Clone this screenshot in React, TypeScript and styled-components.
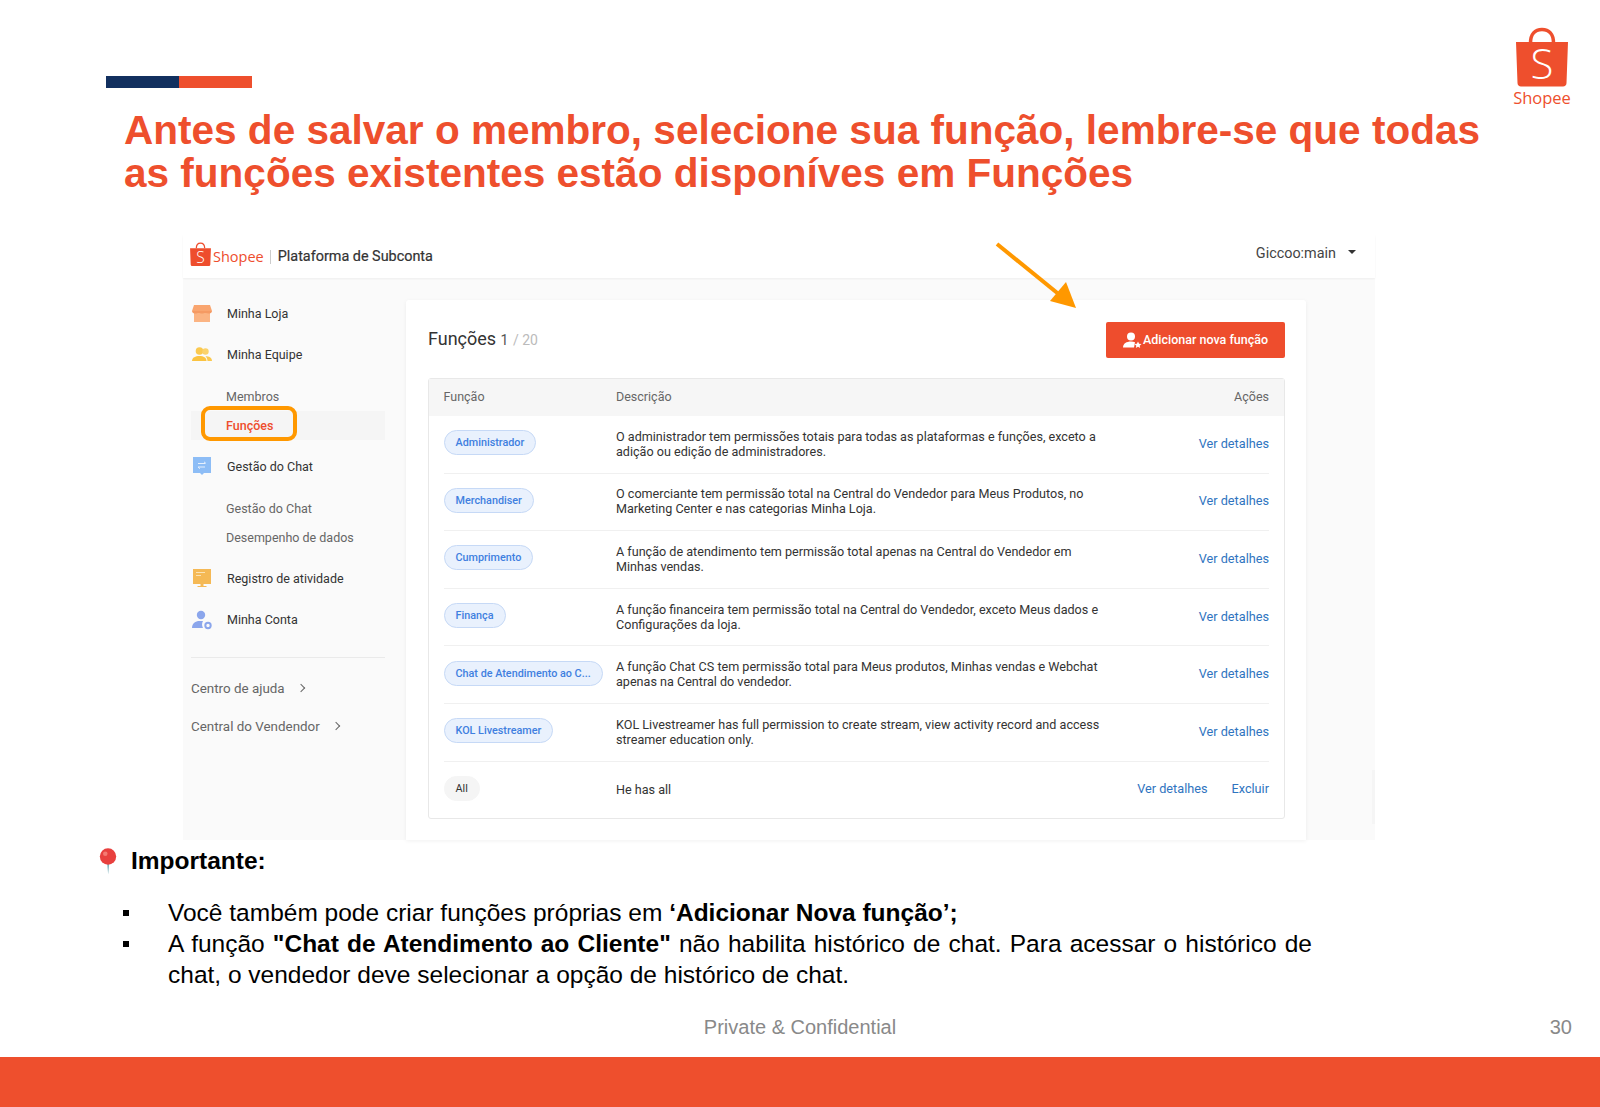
import React from "react";
import styled, { createGlobalStyle } from "styled-components";

const SideTop = [
  { icon: "store", label: "Minha Loja" },
  { icon: "team", label: "Minha Equipe" },
];

const Roles = [
  { tag: "Administrador", text: ["O administrador tem permissões totais para todas as plataformas e funções, exceto a", "adição ou edição de administradores."] },
  { tag: "Merchandiser", text: ["O comerciante tem permissão total na Central do Vendedor para Meus Produtos, no", "Marketing Center e nas categorias Minha Loja."] },
  { tag: "Cumprimento", text: ["A função de atendimento tem permissão total apenas na Central do Vendedor em", "Minhas vendas."] },
  { tag: "Finança", text: ["A função financeira tem permissão total na Central do Vendedor, exceto Meus dados e", "Configurações da loja."] },
  { tag: "Chat de Atendimento ao C...", text: ["A função Chat CS tem permissão total para Meus produtos, Minhas vendas e Webchat", "apenas na Central do vendedor."] },
  { tag: "KOL Livestreamer", text: ["KOL Livestreamer has full permission to create stream, view activity record and access", "streamer education only."] },
];

function NavIcon({ name }: { name: string }) {
  if (name === "store") {
    return (
      <svg width="20" height="20" viewBox="0 0 20 20">
        <path d="M2 1h16l2 6H0z" fill="#f9a56f" />
        <path d="M2 8.500h16V18H2z" fill="#fbb483" />
        <path d="M0 7h20c0 2-2 2.500-3.300 2.500-1.200 0-2.200-.5-3.300-.5s-2 .5-3.400.5-2.300-.5-3.400-.5-2 .5-3.300.5C2 9.500 0 9 0 7z" fill="#f59a63" />
      </svg>
    );
  }
  if (name === "team") {
    return (
      <svg width="20" height="20" viewBox="0 0 20 20">
        <circle cx="7.500" cy="6" r="3.800" fill="#fbc94f" />
        <circle cx="13.500" cy="6.500" r="3.200" fill="#fbd26b" />
        <path d="M0 16c0-3.600 3.500-5 7.500-5s7 1.400 7 5z" fill="#fbc340" />
        <path d="M15.500 16c0-2-.8-3.500-2-4.800 3.500 0 6.500 1.400 6.500 4.800z" fill="#fbc94f" />
      </svg>
    );
  }
  if (name === "chat") {
    return (
      <svg width="20" height="20" viewBox="0 0 20 20">
        <path d="M1 0h18v16h-7l-2 2-2-2H1z" fill="#8dbdf6" />
        <path d="M6 6.500h7M6 10h7" stroke="#e6f0fd" strokeWidth="1" fill="none" />
        <path d="M12 4.800l2 1.700M8 11.700L6 10" stroke="#e6f0fd" strokeWidth="1" fill="none" />
      </svg>
    );
  }
  if (name === "monitor") {
    return (
      <svg width="20" height="20" viewBox="0 0 20 20">
        <path d="M1 0h18v15H1z" fill="#f5b955" />
        <path d="M4 3.500h9M4 6.500h5" stroke="#fbe3b5" strokeWidth="1.200" fill="none" />
        <path d="M8.500 15h3v2h3v1h-9v-1h3z" fill="#f5b955" />
      </svg>
    );
  }
  return (
    <svg width="20" height="20" viewBox="0 0 20 20">
      <circle cx="9" cy="5" r="4.200" fill="#8ba6ec" />
      <path d="M0 18c0-4.500 3.500-7 7.500-7h3.500c-1 1.500-1.500 4.500 0 7z" fill="#8ba6ec" />
      <circle cx="16" cy="15.500" r="2.700" fill="none" stroke="#8ba6ec" strokeWidth="2" />
    </svg>
  );
}

export default function App() {
  return (
    <Slide>
      <GlobalStyle />
      <TopArea>
        <Heading>
          <Bars>
            <BarPiece $color="#12305f" />
            <BarPiece $color="#ee4f2d" />
          </Bars>
          <Title>
            Antes de salvar o membro, selecione sua função, lembre-se que todas
            <br />
            as funções existentes estão disponíves em Funções
          </Title>
        </Heading>
        <Brand>
          <LogoSvg width="54" height="60" viewBox="0 0 54 60">
            <path d="M15.500 16C15.500 7 20 2.500 27 2.500S38.500 7 38.500 16" fill="none" stroke="#ee4f2d" strokeWidth="3.500" />
            <path d="M1 15h52l-1.500 41c0 2-1.500 3.500-3.500 3.500H6c-2 0-3.500-1.500-3.500-3.500z" fill="#ee4f2d" />
            <text x="27" y="52" textAnchor="middle" fontFamily="'Open Sans', sans-serif" fontWeight="300" fontSize="42" fill="#fff">S</text>
          </LogoSvg>
          <BrandName>Shopee</BrandName>
        </Brand>
      </TopArea>

      <Shot>
        <ShotHeader>
          <ShotBrand>
            <ShotLogo width="21" height="24" viewBox="0 0 20 23">
              <path d="M6 6c0-3 1.500-5 4-5s4 2 4 5" fill="none" stroke="#ee4d2d" strokeWidth="1.200" />
              <path d="M0 6h20l-.6 15.500c0 .8-.5 1.500-1.400 1.500H2c-.9 0-1.400-.7-1.400-1.500z" fill="#ee4d2d" />
              <text x="10" y="20" textAnchor="middle" fontFamily="'Open Sans', sans-serif" fontWeight="300" fontSize="15" fill="#fff">S</text>
            </ShotLogo>
            <ShotBrandName>Shopee</ShotBrandName>
            <ShotDivider />
            <ShotPlatform>Plataforma de Subconta</ShotPlatform>
          </ShotBrand>
          <UserMenu>
            Giccoo:main
            <Caret />
          </UserMenu>
        </ShotHeader>

        <ShotBody>
          <Sidebar>
            {SideTop.map((item) => (
              <NavRow key={item.label}>
                <NavIcon name={item.icon} />
                <span>{item.label}</span>
              </NavRow>
            ))}
            <SubGroup>
              <SubRow>Membros</SubRow>
              <SubRow $active>Funções</SubRow>
            </SubGroup>
            <NavRow>
              <NavIcon name="chat" />
              <span>Gestão do Chat</span>
            </NavRow>
            <SubGroup>
              <SubRow>Gestão do Chat</SubRow>
              <SubRow>Desempenho de dados</SubRow>
            </SubGroup>
            <NavRow>
              <NavIcon name="monitor" />
              <span>Registro de atividade</span>
            </NavRow>
            <NavRow>
              <NavIcon name="user" />
              <span>Minha Conta</span>
            </NavRow>
            <SideLine />
            <OuterLink>
              Centro de ajuda
              <Chevron />
            </OuterLink>
            <OuterLink>
              Central do Vendendor
              <Chevron />
            </OuterLink>
          </Sidebar>

          <Card>
            <CardHead>
              <CardTitle>
                Funções <Count>1</Count> <CountMax>/ 20</CountMax>
              </CardTitle>
              <AddButton>
                <svg width="19" height="16" viewBox="0 0 19 16">
                  <circle cx="8" cy="4.500" r="4" fill="#fff" />
                  <path d="M0 15.500c0-4 3.500-6 8-6 1.500 0 2.800.2 4 .7L11 15.500z" fill="#fff" />
                  <path d="M15 9.500l1.100 2.300 2.400.3-1.800 1.600.5 2.300-2.200-1.200-2.200 1.200.5-2.300-1.800-1.600 2.400-.3z" fill="#fff" />
                </svg>
                Adicionar nova função
              </AddButton>
            </CardHead>

            <Table>
              <TableHead>
                <span>Função</span>
                <span>Descrição</span>
                <HeadActions>Ações</HeadActions>
              </TableHead>
              {Roles.map((role) => (
                <Row key={role.tag}>
                  <Cell>
                    <Tag>{role.tag}</Tag>
                  </Cell>
                  <Description>
                    {role.text[0]}
                    <br />
                    {role.text[1]}
                  </Description>
                  <Actions>
                    <ActionLink>Ver detalhes</ActionLink>
                  </Actions>
                </Row>
              ))}
              <Row $last>
                <Cell>
                  <Tag $plain>All</Tag>
                </Cell>
                <Description>He has all</Description>
                <Actions>
                  <ActionLink>Ver detalhes</ActionLink>
                  <ActionLink>Excluir</ActionLink>
                </Actions>
              </Row>
            </Table>
          </Card>
        </ShotBody>

        <Highlight />
        <Arrow width="90" height="74" viewBox="0 0 90 74">
          <path d="M2 2L66 54" stroke="#ff9800" strokeWidth="4" fill="none" />
          <path d="M81 66L55 59 71 40z" fill="#ff9800" />
        </Arrow>
        <ScrollShade />
      </Shot>

      <Notes>
        <NoteTitle>
          <svg width="20" height="28" viewBox="0 0 22 30">
            <path d="M10 17l1.200 12.500 1.200-12.500z" fill="#7fb3bd" />
            <circle cx="11" cy="10" r="9" fill="#e8403e" />
            <circle cx="8" cy="7" r="2.500" fill="#f47a72" />
          </svg>
          Importante:
        </NoteTitle>
        <NoteList>
          <NoteItem>
            Você também pode criar funções próprias em <strong>‘Adicionar Nova função’;</strong>
          </NoteItem>
          <NoteItem>
            A função <strong>"Chat de Atendimento ao Cliente"</strong> não habilita histórico de chat. Para acessar o histórico de chat, o vendedor deve selecionar a opção de histórico de chat.
          </NoteItem>
        </NoteList>
      </Notes>

      <FootRow>
        <span>Private &amp; Confidential</span>
        <PageNumber>30</PageNumber>
      </FootRow>
      <FootBar />
    </Slide>
  );
}

const GlobalStyle = createGlobalStyle`
  html, body {
    margin: 0;
    padding: 0;
    background: #fff;
  }
  * {
    box-sizing: border-box;
  }
`;

const Slide = styled.div`
  width: 1600px;
  height: 1107px;
  display: flex;
  flex-direction: column;
  overflow: hidden;
  background: #fff;
  font-family: "Liberation Sans", Arial, sans-serif;
`;

const TopArea = styled.div`
  height: 235px;
  display: flex;
  justify-content: space-between;
  align-items: flex-start;
  padding: 27px 28px 0 106px;
`;

const Heading = styled.div`
  padding-top: 49px;
`;

const Bars = styled.div`
  display: flex;
  width: 146px;
  height: 12px;
`;

const BarPiece = styled.div<{ $color: string }>`
  flex: 1;
  background: ${(p) => p.$color};
`;

const Title = styled.h1`
  margin: 21px 0 0 18px;
  color: #ee4f2d;
  font-size: 40.540px;
  line-height: 43px;
  font-weight: 700;
  white-space: nowrap;
`;

const Brand = styled.div`
  width: 60px;
  display: flex;
  flex-direction: column;
  align-items: center;
`;

const LogoSvg = styled.svg`
  overflow: visible;
`;

const BrandName = styled.div`
  color: #ee4f2d;
  font-family: "Open Sans", sans-serif;
  font-size: 16.500px;
  line-height: 22px;
`;

const Shot = styled.div`
  position: relative;
  width: 1192px;
  height: 605px;
  margin-left: 183px;
  display: flex;
  flex-direction: column;
  font-family: Roboto, sans-serif;
  background: #fafafa;
`;

const ShotHeader = styled.div`
  height: 43px;
  flex: none;
  display: flex;
  justify-content: space-between;
  align-items: center;
  padding: 0 19px 0 7px;
  background: #fff;
  box-shadow: 0 1px 2px rgba(0, 0, 0, 0.05);
`;

const ShotBrand = styled.div`
  display: flex;
  align-items: center;
`;

const ShotLogo = styled.svg`
  margin-bottom: 6px;
  overflow: visible;
`;

const ShotBrandName = styled.span`
  margin-left: 2px;
  color: #ee4d2d;
  font-family: "Open Sans", sans-serif;
  font-size: 14.500px;
`;

const ShotDivider = styled.span`
  width: 1px;
  height: 14px;
  margin: 0 7px 0 6px;
  background: #ccc;
`;

const ShotPlatform = styled.span`
  color: #333;
  font-size: 14.400px;
  font-weight: 400;
  -webkit-text-stroke: 0.2px #333;
`;

const UserMenu = styled.div`
  display: flex;
  align-items: center;
  gap: 12px;
  padding-bottom: 6px;
  color: #444;
  font-size: 14.400px;
`;

const Caret = styled.span`
  width: 0;
  height: 0;
  margin-bottom: 3px;
  border-left: 4px solid transparent;
  border-right: 4px solid transparent;
  border-top: 4px solid #333;
`;

const ShotBody = styled.div`
  flex: 1;
  display: flex;
  min-height: 0;
`;

const Sidebar = styled.div`
  width: 223px;
  flex: none;
  padding: 15px 21px 0 8px;
`;

const NavRow = styled.div`
  height: 41px;
  display: flex;
  align-items: center;
  gap: 15px;
  padding-left: 1px;
  color: #333;
  font-size: 12.500px;
`;

const SubGroup = styled.div`
  padding: 6.500px 0;
`;

const SubRow = styled.div<{ $active?: boolean }>`
  height: 29px;
  display: flex;
  align-items: center;
  padding-left: 35px;
  font-size: 12.500px;
  color: ${(p) => (p.$active ? "#ee4d2d" : "#666")};
  font-weight: ${(p) => (p.$active ? 500 : 400)};
  background: ${(p) => (p.$active ? "#f5f5f5" : "transparent")};
`;

const SideLine = styled.div`
  height: 1px;
  margin: 17px 0 11px;
  background: #eaeaea;
`;

const OuterLink = styled.div`
  height: 38px;
  display: flex;
  align-items: center;
  gap: 13px;
  color: #666;
  font-size: 13.400px;
`;

const Chevron = styled.span`
  width: 6px;
  height: 6px;
  border-top: 1px solid #666;
  border-right: 1px solid #666;
  transform: rotate(45deg);
`;

const Card = styled.div`
  width: 900px;
  margin-top: 22px;
  padding: 22px 21px 0 22px;
  background: #fff;
  border-radius: 3px 3px 0 0;
  box-shadow: 0 1px 4px rgba(0, 0, 0, 0.06);
`;

const CardHead = styled.div`
  height: 35px;
  display: flex;
  justify-content: space-between;
  align-items: center;
`;

const CardTitle = styled.div`
  padding-bottom: 2px;
  color: #333;
  font-size: 18px;
`;

const Count = styled.span`
  font-size: 14px;
  color: #555;
`;

const CountMax = styled.span`
  font-size: 14px;
  color: #bbb;
`;

const AddButton = styled.div`
  width: 179px;
  height: 36px;
  display: flex;
  align-items: center;
  justify-content: center;
  gap: 1px;
  color: #fff;
  font-size: 12.500px;
  font-weight: 500;
  background: #ee4d2d;
  border-radius: 2px;
`;

const Table = styled.div`
  margin-top: 21px;
  border: 1px solid #e8e8e8;
  border-radius: 3px;
  padding: 0 15px 0 14.500px;
`;

const TableHead = styled.div`
  height: 37px;
  margin: 0 -15px 0 -14.500px;
  padding: 0 15px 3px 14.500px;
  display: grid;
  grid-template-columns: 172.500px 1fr auto;
  align-items: center;
  color: #666;
  font-size: 12.500px;
  background: #f6f6f6;
`;

const HeadActions = styled.span`
  text-align: right;
`;

const Row = styled.div<{ $last?: boolean }>`
  height: ${(p) => (p.$last ? "56.600px" : "57.600px")};
  display: grid;
  grid-template-columns: 172.500px 1fr auto;
  align-items: center;
  border-bottom: ${(p) => (p.$last ? "none" : "1px solid #f0f0f0")};
`;

const Cell = styled.div`
  display: flex;
  padding-bottom: 3px;
`;

const Tag = styled.span<{ $plain?: boolean }>`
  height: 25px;
  padding: 0 11px;
  display: inline-flex;
  align-items: center;
  font-size: 10.800px;
  font-weight: ${(p) => (p.$plain ? 400 : 500)};
  color: ${(p) => (p.$plain ? "#333" : "#3f7fe0")};
  background: ${(p) => (p.$plain ? "#f5f5f5" : "#e9f1fd")};
  border: 1px solid ${(p) => (p.$plain ? "#f5f5f5" : "#c6d9f6")};
  border-radius: 13px;
  white-space: nowrap;
`;

const Description = styled.div`
  padding-bottom: 1px;
  color: #333;
  font-size: 12.600px;
  line-height: 15px;
  white-space: nowrap;
`;

const Actions = styled.div`
  display: flex;
  justify-content: flex-end;
  gap: 24px;
  padding-bottom: 2px;
`;

const ActionLink = styled.span`
  color: #2f74c0;
  font-size: 12.700px;
`;

const Highlight = styled.div`
  position: absolute;
  left: 18px;
  top: 171px;
  width: 96px;
  height: 35px;
  border: 4px solid #ff9800;
  border-radius: 9px;
`;

const Arrow = styled.svg`
  position: absolute;
  left: 811.500px;
  top: 7px;
`;

const ScrollShade = styled.div`
  position: absolute;
  right: 0;
  top: 535px;
  width: 3px;
  height: 54px;
  background: rgba(0, 0, 0, 0.02);
`;

const Notes = styled.div`
  padding: 5px 0 0 98px;
`;

const NoteTitle = styled.div`
  height: 32px;
  display: flex;
  align-items: center;
  gap: 13px;
  color: #000;
  font-size: 24.500px;
  font-weight: 700;
`;

const NoteList = styled.ul`
  margin: 20px 0 0;
  padding: 0 0 0 70px;
  list-style: none;
`;

const NoteItem = styled.li`
  position: relative;
  width: 1144px;
  color: #000;
  font-size: 24.500px;
  line-height: 31px;
  text-align: justify;

  &::before {
    content: "";
    position: absolute;
    left: -45px;
    top: 13px;
    width: 6px;
    height: 6px;
    background: #000;
  }
`;

const FootRow = styled.div`
  position: relative;
  margin-top: auto;
  height: 60px;
  display: flex;
  align-items: center;
  justify-content: center;
  color: #898989;
  font-size: 20px;
`;

const PageNumber = styled.span`
  position: absolute;
  right: 28px;
`;

const FootBar = styled.div`
  height: 50px;
  flex: none;
  background: #ee4f2d;
`;
